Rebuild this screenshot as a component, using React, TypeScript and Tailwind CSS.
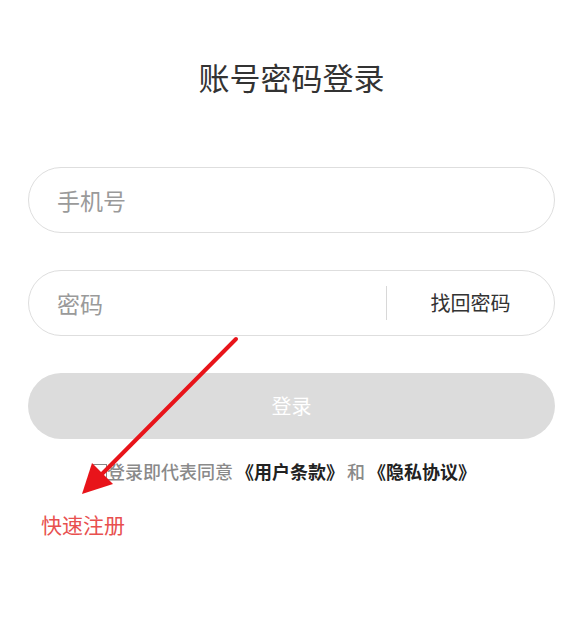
const font = { fontFamily: '"Noto Sans CJK SC", "Noto Sans", sans-serif' };

function Arrow() {
  return (
    <svg
      className="pointer-events-none absolute left-0 top-0"
      width="583"
      height="634"
      viewBox="0 0 583 634"
    >
      <line x1="236" y1="339" x2="100" y2="476" stroke="#e8141a" strokeWidth="4" strokeLinecap="round" />
      <polygon points="82,494 92,463 113,484" fill="#e8141a" />
    </svg>
  );
}

export default function App() {
  return (
    <div className="relative min-h-[634px] bg-white px-[28px] pt-[55px]" style={font}>
      <h1 className="text-center text-[31px] leading-[44px] text-[#333]">账号密码登录</h1>

      <div className="mt-[68px] flex flex-col gap-[37px]">
        <div className="flex h-[66px] items-center rounded-full border border-[#dedede] pl-[28px]">
          <span className="text-[23px] text-[#9a9a9a]">手机号</span>
        </div>

        <div className="flex h-[66px] items-center rounded-full border border-[#dedede] pl-[28px]">
          <span className="flex-1 text-[23px] text-[#9a9a9a]">密码</span>
          <span className="h-[34px] w-px bg-[#d8d8d8]" />
          <span className="flex w-[167px] justify-center text-[20px] text-[#333]">找回密码</span>
        </div>

        <button className="h-[66px] rounded-full bg-[#dcdcdc] text-[20px] text-white">登录</button>
      </div>

      <div className="mt-[20px] flex items-center justify-center pr-[14px] text-[18px] leading-[24px]">
        <span className="h-[14px] w-[14px] border border-[#888]" />
        <span className="font-medium text-[#8a8a8a]">登录即代表同意</span>
        <span className="ml-[3px] font-bold text-[#222]">《用户条款》</span>
        <span className="mx-[3px] font-medium text-[#8a8a8a]">和</span>
        <span className="font-bold text-[#222]">《隐私协议》</span>
      </div>

      <div className="mt-[27px] pl-[13px] text-[21px] leading-[28px] text-[#e8504f]">快速注册</div>

      <Arrow />
    </div>
  );
}
